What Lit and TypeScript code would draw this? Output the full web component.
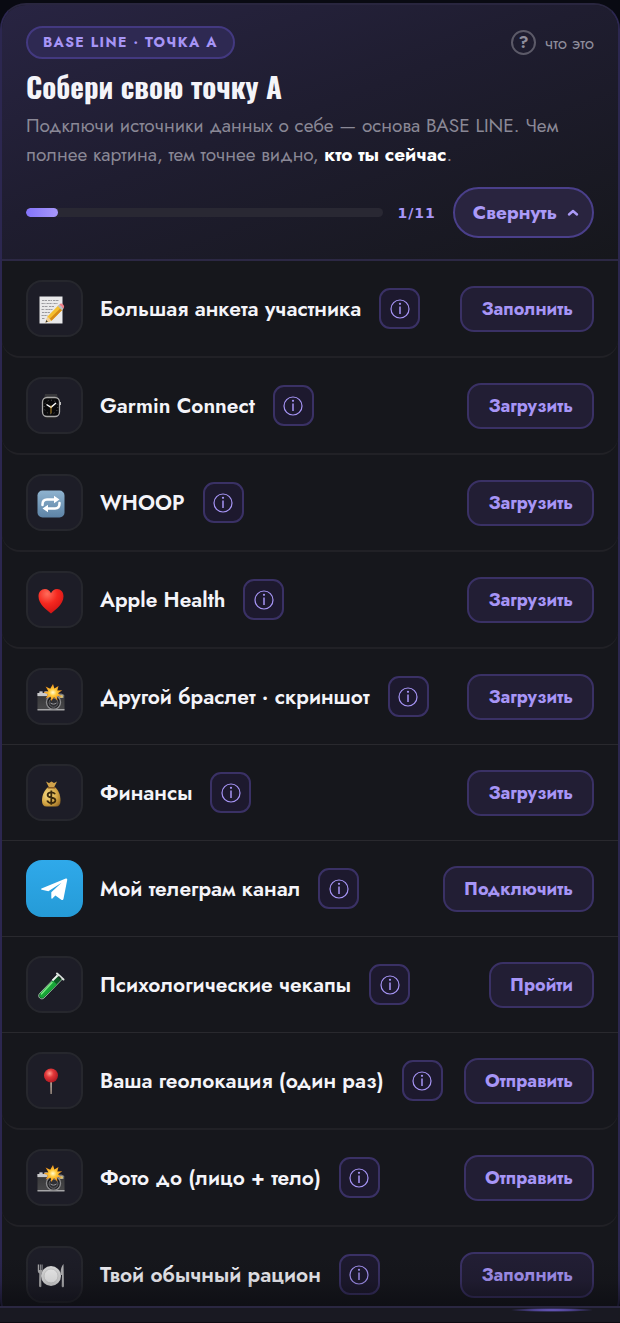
import { LitElement, html, css, svg, nothing } from "lit";
import type { TemplateResult } from "lit";
import { customElement, property } from "lit/decorators.js";
import { classMap } from "lit/directives/class-map.js";

interface Source {
  icon: string;
  title: string;
  action: string;
  inset?: boolean;
}

const SOURCES: Source[] = [
  { icon: "memo", title: "Большая анкета участника", action: "Заполнить", inset: true },
  { icon: "watch", title: "Garmin Connect", action: "Загрузить", inset: true },
  { icon: "repeat", title: "WHOOP", action: "Загрузить", inset: true },
  { icon: "heart", title: "Apple Health", action: "Загрузить", inset: true },
  { icon: "camera", title: "Другой браслет · скриншот", action: "Загрузить" },
  { icon: "money", title: "Финансы", action: "Загрузить" },
  { icon: "telegram", title: "Мой телеграм канал", action: "Подключить" },
  { icon: "tube", title: "Психологические чекапы", action: "Пройти" },
  { icon: "pin", title: "Ваша геолокация (один раз)", action: "Отправить", inset: true },
  { icon: "camera", title: "Фото до (лицо + тело)", action: "Отправить", inset: true },
  { icon: "plate", title: "Твой обычный рацион", action: "Заполнить" },
];

const camera = svg`
  <defs>
    <linearGradient id="body" x1="0" y1="0" x2="0" y2="1">
      <stop offset="0" stop-color="#8b8b8d"/><stop offset=".22" stop-color="#5d5d60"/>
      <stop offset=".3" stop-color="#3a3a3c"/><stop offset="1" stop-color="#48484a"/>
    </linearGradient>
    <radialGradient id="flash"><stop offset="0" stop-color="#fffbd0"/><stop offset=".4" stop-color="#ffc93a"/><stop offset="1" stop-color="#f08a14"/></radialGradient>
  </defs>
  <path d="M.5 9h2V7.500h3V9h2V7.500h3v2h14l3 2V26H.5z" fill="url(#body)"/>
  <path d="M.5 9h2V7.500h3V9h2V7.500h3V12H.5z" fill="#c9c9cb"/>
  <path d="M.5 25h27v1.500H.5z" fill="#a5a5a7"/>
  <path d="M22 10.500h4.500V14H22z" fill="#9b9b94"/>
  <circle cx="16.500" cy="18.300" r="7" fill="#1b1b1d" stroke="#8c8c8e" stroke-width="1.400"/>
  <circle cx="16.500" cy="18.800" r="4.500" fill="#303033" stroke="#69696d"/>
  <path d="M13.500 19c2 1.500 4 1.500 6 0" stroke="#98989d" fill="none"/>
  <circle cx="24.500" cy="12.500" r="1.300" fill="#e3c766"/>
  <path d="M16 0l1.400 4.600L21.500 2l-1.200 4.600 5-.4-4.300 3 3.700 3.600-4.900-.8.700 4.400-3.500-3.200L14.200 17l-.6-4.400-4.900 1.800 2.400-4.200L6.500 8.400l4.900-1.200-2.800-4.600 4.600 2.200z" fill="url(#flash)"/>`;

const ART: Record<string, TemplateResult> = {
  memo: svg`
    <path d="M2.500.500h23v27h-23z" fill="#e9e9ea"/>
    <path d="M5 4.500h5m1 0h4m1 0h6M4.500 7.500h4m1 0h6m1 0h4M5 10.500h6m1 0h5M4.500 13.500h3m1 0h7M5 16.500h8M4.500 19.500h6M5 22.500h3" stroke="#85858a" stroke-width=".8" stroke-dasharray="2.300 .5"/>
    <path d="M8.500 26.500l2-6L21.500 9.200l4.200 4.200-11.200 11.400z" fill="#f4bf2f"/>
    <path d="M12.500 22.900L24 11.700l1.700 1.700-11.200 11.400z" fill="#d58a17"/>
    <path d="M8.500 26.500l2-6 4 4.300z" fill="#efcf9c"/>
    <path d="M8.500 26.500l.8-2.400 1.600 1.700z" fill="#333"/>
    <path d="M20.700 10.100l1.700-1.700 4.200 4.200-1.700 1.700z" fill="#b9bdc2"/>
    <path d="M22.300 8.500c1-1.200 2.600-1.200 3.800 0s1.400 2.800.3 3.900z" fill="#ee8088"/>`,
  watch: svg`
    <path d="M8 1h12l1 5H7z" fill="#37373a"/><path d="M8 23h12l-1 3.500H9z" fill="#202022"/>
    <rect x="5.500" y="4.500" width="17" height="19" rx="4.500" fill="#09090a" stroke="#a9a8a7" stroke-width="1.300"/>
    <path d="M23.300 9v3" stroke="#c4c4c4" stroke-width="1.300"/>
    <circle cx="14" cy="14" r="6.800" fill="none" stroke="#8b8b8c" stroke-width=".9" stroke-dasharray=".7 2.860"/>
    <path d="M9.500 11.500l4.500 2.800 5-4.300" stroke="#fff" stroke-width="1.400" fill="none"/>
    <path d="M14 12.500v8" stroke="#d5a02d" stroke-width=".9"/>`,
  repeat: svg`
    <defs><linearGradient id="tile" x1="0" y1="0" x2="0" y2="1"><stop stop-color="#8fb3cf"/><stop offset="1" stop-color="#5d83a6"/></linearGradient></defs>
    <rect x=".5" y=".5" width="27" height="27" rx="5" fill="url(#tile)"/>
    <path d="M5.500 15v-.5c0-3.500 1.800-5 4.500-5h8M22.500 13v.5c0 3.500-1.800 5-4.500 5h-8" fill="none" stroke="#fff" stroke-width="2.500" stroke-linecap="round"/>
    <path d="M17 5.700l5.500 3.800-5.500 3.800zM11 14.700v7.600l-5.500-3.800z" fill="#fff"/>`,
  heart: svg`
    <defs><radialGradient id="red" cx=".35" cy=".2" r=".9"><stop stop-color="#ff6d5b"/><stop offset=".45" stop-color="#f5281f"/><stop offset="1" stop-color="#c90f12"/></radialGradient></defs>
    <path d="M14 26.500C9.500 22.500 1.500 17.500 1.500 9.300 1.500 5 4.300 2 7.900 2c2.800 0 5 1.600 6.100 4.300C15.100 3.600 17.300 2 20.100 2c3.600 0 6.400 3 6.400 7.300 0 8.200-8 13.200-12.500 17.200z" fill="url(#red)"/>`,
  camera,
  money: svg`
    <defs><radialGradient id="gold" cx=".35" cy=".4" r=".8"><stop stop-color="#f7dd88"/><stop offset=".6" stop-color="#d3a543"/><stop offset="1" stop-color="#8f6421"/></radialGradient></defs>
    <path d="M9 1.500l3 1.500 2.500-1.500L17 3l3-1.500-3 6h-5z" fill="#d0a24a"/>
    <path d="M11.500 7h6c4 2.500 6 8 6 13.500 0 4-1.500 6-4.500 6H9.500c-3 0-4.500-2-4.500-6C5 15 7.500 9.500 11.500 7z" fill="url(#gold)"/>
    <path d="M10.800 7h7.400v1.600h-7.400z" fill="#8a5c25"/>
    <path d="M18 14.300c-.5-1.300-1.900-2-3.700-2-2.200 0-3.700 1-3.700 2.600 0 3.800 7.800 1.800 7.800 5.400 0 1.700-1.600 2.700-4 2.700-2.100 0-3.700-.9-4.200-2.500M14.300 10.500v14.300" fill="none" stroke="#37270c" stroke-width="1.800"/>`,
  tube: svg`
    <path d="M20.500 3l4.500 4.500L7 26c-3 2.500-7-1-4.500-4.500z" fill="#0d5a24" stroke="#b9cfc0" stroke-width=".8"/>
    <path d="M16 8.500l4 4L6.500 25.400c-2.500 1.600-5-1.200-3.400-3.300z" fill="#17a637"/>
    <path d="M15 10.500L4.500 21.800" stroke="#7ce884" stroke-width="1.600" stroke-linecap="round"/>
    <path d="M20.500 3.500l-5 5" stroke="#eef3ef" stroke-width="1.800"/>
    <path d="M20 1.500l6.500 6" stroke="#dce2de" stroke-width="2" stroke-linecap="round"/>
    <path d="M21.500 4.500l2.500 2.400" stroke="#1c2b22" stroke-width="1.400"/>`,
  pin: svg`
    <defs><radialGradient id="ball" cx=".4" cy=".35" r=".7"><stop stop-color="#ff9a8c"/><stop offset=".4" stop-color="#e2383a"/><stop offset="1" stop-color="#a8151f"/></radialGradient></defs>
    <path d="M13.200 13h1.800l-.3 13h-1.200z" fill="#b8a596"/>
    <circle cx="14" cy="7.500" r="7" fill="url(#ball)"/>`,
  plate: svg`
    <circle cx="14" cy="14" r="10" fill="#dedede"/>
    <circle cx="14" cy="14" r="7" fill="#f0f0f0" stroke="#c8c8c8" stroke-width=".8"/>
    <path d="M.8 2.500v6c0 2 .7 2.500 1.500 3L2 24c0 1.600 2.400 1.600 2.400 0L4 11.500c.9-.5 1.500-1 1.500-3v-6h-.9V8h-.8V2.500h-1V8H2V2.500z" fill="#a9a9ab"/>
    <path d="M26.500 2c-2 2-3 5.500-3 11h1.500l-.3 11c0 1.700 2.300 1.700 2.300 0z" fill="#b4b4b6"/>`,
  telegram: svg`<path d="M.5 10.600L24.800.600c.9-.3 1.600.2 1.400 1.300l-3.700 18.800c-.3 1.300-1.200 1.600-2.200 1l-5.900-4.300-3 3c-.5.500-1.100.3-1.100-.5v-5.600L20.500 4.800 7.400 13.300.800 11.800c-.9-.3-.9-.9-.3-1.200z" fill="#fff"/>`,
};

@customElement("source-row")
export class SourceRow extends LitElement {
  @property({ attribute: false }) source!: Source;

  static styles = css`
    :host { display: block; }
    .row {
      display: flex;
      align-items: center;
      padding: 19px 24px;
      border-bottom: 1px solid #29292e;
    }
    .row.inset {
      border-bottom: 2px solid #212126;
      border-radius: 0 0 18px 18px;
    }
    .tile {
      box-sizing: border-box;
      flex: none;
      display: flex;
      align-items: center;
      width: 57px;
      height: 57px;
      padding: 3px 0 0 9px;
      border: 2px solid #26272d;
      border-radius: 16px;
      background: #1d1d27;
    }
    .tile.brand {
      padding: 0 0 0 15px;
      border: 0;
      background: linear-gradient(#2fa9ea, #259bd7);
    }
    .art { display: block; width: 28px; height: 28px; }
    .brand .art { width: 27px; height: 22px; }
    .title {
      margin: 0 18px 0 17px;
      font-size: 21px;
      font-weight: 600;
      line-height: 30px;
      color: #f4f4f9;
      white-space: nowrap;
    }
    button {
      box-sizing: border-box;
      flex: none;
      border: 2px solid #3a3165;
      background: #221e34;
      color: #a795f6;
      font: 700 18px/24px Jost, sans-serif;
      cursor: pointer;
    }
    .info {
      display: grid;
      place-items: center;
      width: 41px;
      height: 41px;
      padding: 0;
      border-radius: 11px;
      background: #1d192e;
    }
    .info svg { width: 20px; height: 20px; }
    .action {
      height: 46px;
      margin-left: auto;
      padding: 0 19px;
      border-radius: 14px;
    }
  `;

  render() {
    const { icon, title, action, inset } = this.source;
    const brand = icon === "telegram";
    return html`
      <div class=${classMap({ row: true, inset: !!inset })}>
        <span class=${classMap({ tile: true, brand })}>
          <svg class="art" viewBox=${brand ? "0 0 27 22" : "0 0 28 28"} aria-hidden="true">${ART[icon] ?? nothing}</svg>
        </span>
        <span class="title">${title}</span>
        <button class="info" aria-label=${`Подробнее: ${title}`}>
          <svg viewBox="0 0 20 20" fill="none" stroke="#a795f6" aria-hidden="true">
            <circle cx="10" cy="10" r="9" stroke-width="1.200" />
            <path d="M10 7.500v7.500" stroke-width="1.500" />
            <circle cx="10" cy="4.800" r="1.100" fill="#a795f6" stroke="none" />
          </svg>
        </button>
        <button class="action">${action}</button>
      </div>
    `;
  }
}

@customElement("app-root")
export class AppRoot extends LitElement {
  @property({ type: Number }) done = 1;

  static styles = css`
    :host {
      display: flex;
      flex-direction: column;
      height: 100vh;
      background: #090a12;
      color: #f1f1f6;
      font-family: Jost, sans-serif;
    }
    .view {
      position: relative;
      flex: 1;
      min-height: 0;
      overflow: hidden;
      padding-top: 3px;
    }
    .view::after {
      content: "";
      position: absolute;
      inset: auto 0 0;
      height: 50px;
      background: linear-gradient(transparent, #0a0a1022 50%, #0a0a1099);
      pointer-events: none;
    }
    .card {
      border: 2px solid #2c2750;
      border-top-color: #29263f;
      border-radius: 26px;
      background: #16171c;
      overflow: hidden;
    }
    header {
      padding: 21px 24px;
      border-bottom: 2px solid #2c2844;
      background: linear-gradient(160deg, #282442 0%, #1f1d30 45%, #16171c 100%);
    }
    .top, .progress { display: flex; align-items: center; }
    .top { justify-content: space-between; }
    .badge {
      padding: 4px 15px 5px;
      border: 2px solid #433980;
      border-radius: 17px;
      background: #2e2952;
      color: #a795f6;
      font-size: 14px;
      font-weight: 700;
      line-height: 20px;
      letter-spacing: 0.1em;
    }
    .help {
      display: flex;
      align-items: center;
      gap: 9px;
      padding: 0;
      border: 0;
      background: none;
      color: #8f8e9c;
      font: 400 17px/24px Jost, sans-serif;
      cursor: pointer;
    }
    .mark {
      box-sizing: border-box;
      width: 25px;
      height: 25px;
      border: 2px solid #5c5a68;
      border-radius: 50%;
      font-size: 16px;
      font-weight: 700;
      line-height: 21px;
      text-align: center;
    }
    h1 {
      margin: 9px 0 7px;
      font: 700 29px/36px Oswald, sans-serif;
      color: #f4f4f9;
    }
    p {
      margin: 0;
      color: #8a8896;
      font-size: 19px;
      line-height: 29px;
    }
    p b { color: #fff; font-weight: 700; }
    .progress { margin-top: 18px; }
    .track {
      flex: 1;
      height: 9px;
      margin-right: 14px;
      border-radius: 5px;
      background: #292833;
      overflow: hidden;
    }
    .fill {
      height: 100%;
      border-radius: 5px;
      background: linear-gradient(90deg, #8474fa, #a898fb);
    }
    .count {
      color: #a795f6;
      font: 700 14px/24px "DejaVu Sans", sans-serif;
      letter-spacing: 1px;
    }
    .toggle {
      display: flex;
      align-items: center;
      gap: 10px;
      height: 51px;
      margin-left: 17px;
      padding: 0 13px 0 18px;
      border: 2px solid #4a3f8a;
      border-radius: 26px;
      background: #29243f;
      color: #ab9af8;
      font: 700 19px/26px Jost, sans-serif;
      cursor: pointer;
    }
    .toggle svg { width: 12px; height: 8px; }
    nav {
      display: flex;
      justify-content: flex-end;
      height: 14px;
      padding-right: 26px;
      border-top: 2px solid #2a2741;
      border-bottom: 1px solid #0c0a12;
      background: #191922;
    }
    .glow {
      width: 84px;
      height: 4px;
      background: radial-gradient(closest-side, #7462cf, #4d4291 50%, transparent);
    }
  `;

  render() {
    const total = SOURCES.length;
    return html`
      <main class="view">
        <section class="card">
          <header>
            <div class="top">
              <span class="badge">BASE LINE · ТОЧКА А</span>
              <button class="help"><span class="mark">?</span>что это</button>
            </div>
            <h1>Собери свою точку А</h1>
            <p>Подключи источники данных о себе — основа BASE LINE. Чем полнее картина, тем точнее видно, <b>кто ты сейчас</b>.</p>
            <div class="progress">
              <div class="track"><div class="fill" style="width:${(this.done / total) * 100}%"></div></div>
              <span class="count">${this.done}/${total}</span>
              <button class="toggle" aria-expanded="true">
                Свернуть
                <svg viewBox="0 0 12 8" fill="none" stroke="currentColor" stroke-width="2.400" stroke-linecap="round" stroke-linejoin="round" aria-hidden="true"><path d="M2 5.500L6 2l4 3.500" /></svg>
              </button>
            </div>
          </header>
          ${SOURCES.map((source) => html`<source-row .source=${source}></source-row>`)}
        </section>
      </main>
      <nav aria-label="Меню"><span class="glow"></span></nav>
    `;
  }
}
